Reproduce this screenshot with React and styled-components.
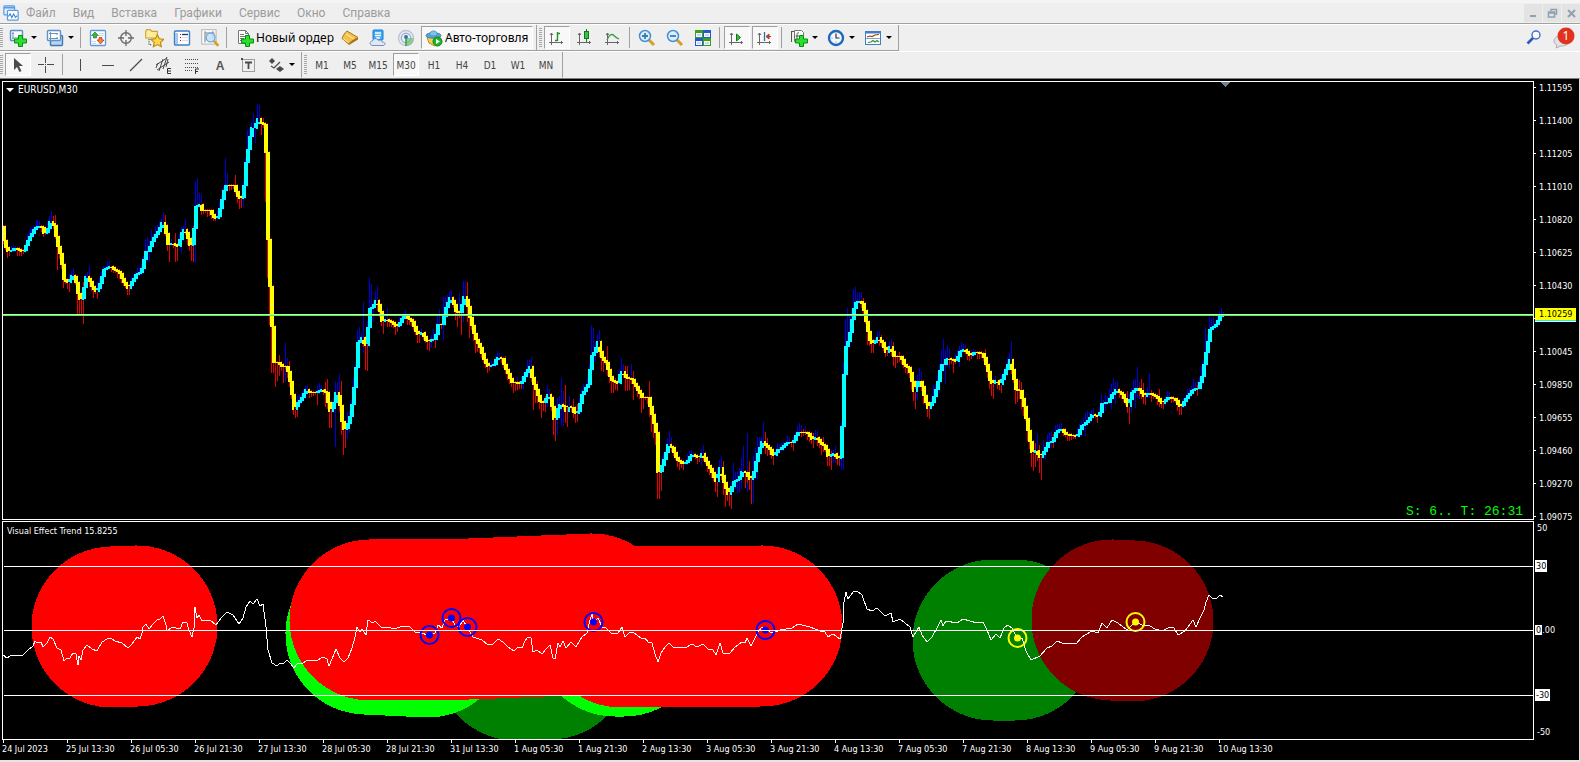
import React, { useState } from 'react';
import styled, { createGlobalStyle, css } from 'styled-components';

const GlobalStyle = createGlobalStyle`
  * { box-sizing: border-box; }
  body {
    margin: 0;
    background: #efefef;
    font-family: "Noto Sans", "Open Sans", sans-serif;
  }
  button {
    font: inherit;
    color: inherit;
    border: 0;
    padding: 0;
    background: none;
  }
`;

const MenuBar = styled.header`
  display: flex;
  align-items: center;
  height: 24px;
  padding-left: 3px;
  border-top: 3px solid #f4f4f4;
  border-bottom: 1px solid #a0a0a0;
`;

const MenuNav = styled.nav`
  display: flex;
  flex: 1;
  gap: 17px;
  margin-left: 7px;
`;

const MenuItem = styled.button`
  font-family: Roboto, "Noto Sans", sans-serif;
  font-size: 12px;
  line-height: 18px;
  color: #9b9b9b;
`;

const WindowButtons = styled.div`
  display: flex;
  gap: 1px;
`;

const WindowButton = styled.button`
  display: flex;
  align-items: center;
  justify-content: center;
  width: 18px;
  height: 18px;
  background: #e3e3e3;
`;

const ToolbarRow = styled.div`
  display: flex;
  height: 27px;
  border-top: 1px solid #fff;
`;

const Toolbar = styled.div`
  display: flex;
  align-items: center;
  border-right: 1px solid #a0a0a0;
  border-bottom: 1px solid ${p => (p.$last ? '#efefef' : '#a0a0a0')};
  padding-right: 2px;
`;

const Grip = styled.span`
  width: 3px;
  height: 20px;
  margin: 0 1px 0 ${p => (p.$wide ? 2 : 0)}px;
  background: repeating-linear-gradient(#a8a8a8 0 1px, #efefef 1px 2px);
`;

const Separator = styled.span`
  width: 1px;
  height: 21px;
  margin: 0 3px 0 2px;
  background: #a0a0a0;
`;

const pressed = css`
  border: 1px solid #fff;
  border-top-color: #a0a0a0;
  border-left-color: #a0a0a0;
  background: #f8f8f8;
`;

const Tool = styled.button`
  display: flex;
  align-items: center;
  justify-content: center;
  width: ${p => (p.$drop ? 37 : 26)}px;
  height: 23px;
  margin: 0 ${p => (p.$drop ? 0 : 1)}px;
  gap: 4px;
  ${p => p.$on && pressed}
`;

const TextTool = styled(Tool)`
  width: auto;
  padding: 0 ${p => (p.$on ? 4 : 1)}px 0 ${p => (p.$on ? 3 : 5)}px;
  gap: 2px;
  font-size: 12px;
  color: #000;
  white-space: nowrap;
`;

const Timeframe = styled(Tool)`
  padding-top: 2px;
  font-family: "DejaVu Sans Condensed", "DejaVu Sans", sans-serif;
  font-size: 10px;
  color: #444;
`;

const Caret = styled.span`
  border: 3px solid transparent;
  border-top-color: #000;
  border-bottom: 0;
`;

const RightTools = styled.div`
  display: flex;
  flex: 1;
  justify-content: flex-end;
  align-items: center;
  gap: 4px;
  padding-right: 4px;
`;

const Workspace = styled.main`
  display: grid;
  grid-template-columns: minmax(0, 1fr) 45px;
  row-gap: 1px;
  padding: 2px 0 0 2px;
  border-top: 1px solid #808080;
  border-right: 1px solid #e0e0e0;
  border-bottom: 2px solid #e4e4e4;
  background: #000;
  color: #fff;
  font-family: "DejaVu Sans Condensed", "DejaVu Sans", sans-serif;
  font-size: 9px;
  line-height: 12px;
`;

const Pane = styled.section`
  position: relative;
  border: 1px solid #fff;
`;

const Plot = styled.svg`
  display: block;
  width: 100%;
  height: ${p => p.$height}px;
`;

const PaneTitle = styled.h2`
  position: absolute;
  top: ${p => (p.$small ? 3 : 2)}px;
  left: ${p => (p.$small ? 4 : 3)}px;
  display: flex;
  align-items: center;
  gap: 4px;
  margin: 0;
  font-size: ${p => (p.$small ? 9 : 10)}px;
  font-weight: normal;
`;

const TitleArrow = styled.span`
  border: 4px solid transparent;
  border-top-color: #fff;
  border-bottom: 0;
`;

const SpreadTimer = styled.p`
  position: absolute;
  right: 10px;
  bottom: 0;
  margin: 0;
  font: 13px/15px "Liberation Mono", monospace;
  color: #00ff00;
`;

const PriceAxis = styled.div`
  position: relative;
  display: flex;
  flex-direction: column;
  gap: 21px;
  padding-top: 1px;
  margin-bottom: -5px;
`;

const PriceLabel = styled.span`
  position: relative;
  height: 12px;
  padding-left: 5px;
  &::before {
    content: "";
    position: absolute;
    left: 0;
    top: 5px;
    width: 2px;
    height: 1px;
    background: #fff;
  }
`;

const PriceTag = styled.span`
  position: absolute;
  left: 1px;
  top: 227px;
  width: 41px;
  height: 13px;
  padding-left: 4px;
  line-height: 12px;
  background: #ff0;
  color: #000;
  border-bottom: 1px solid #00ffff;
  box-shadow: 0 1px #fff;
`;

const LevelAxis = styled.div`
  display: grid;
  grid-template-rows: 38px 64px 65px 37px 12px;
  align-items: start;
  justify-items: start;
  padding: 1px 0 0 1px;
`;

const LevelLabel = styled.span`
  padding: 0 2px;
  line-height: 12px;
`;

const LevelMark = styled.mark`
  padding: 0 1px;
  background: #fff;
  color: #000;
`;

const TimeAxis = styled.div`
  display: flex;
  grid-column: 1 / -1;
  height: 20px;
  margin-top: -1px;
  overflow: hidden;
`;

const TimeLabel = styled.span`
  flex: 0 0 64px;
  padding-top: 3px;
  white-space: nowrap;
  &::before {
    content: "";
    display: block;
    width: 1px;
    height: 3px;
    margin: -3px 0 0 1px;
    background: #fff;
  }
`;

const trend = [
  [3,233],[8,252],[13,251],[16,248],[22,252],[25,251],[30,239],[36,228],[40,227],[43,228],[45,234],[48,233],[51,222],[55,226],[58,243],[62,257],[65,280],[69,283],[73,276],[76,277],[80,300],[83,299],[87,277],[90,280],[94,289],[97,292],[100,287],[105,270],[111,267],[114,269],[120,272],[124,281],[129,289],[132,284],[137,275],[142,273],[147,252],[149,252],[154,240],[159,232],[163,223],[166,228],[169,245],[173,244],[179,247],[183,233],[185,230],[188,235],[192,250],[194,240],[197,207],[201,205],[203,211],[211,211],[216,220],[219,217],[223,200],[226,186],[235,186],[240,200],[244,197],[247,163],[251,137],[253,128],[256,130],[258,117],[261,123],[265,125],[267,153],[269,240],[271,287],[273,327],[275,363],[279,363],[283,367],[288,367],[292,387],[295,410],[299,403],[303,398],[307,390],[311,393],[318,393],[323,390],[327,393],[331,412],[334,408],[337,393],[340,398],[344,430],[348,428],[352,413],[356,380],[359,343],[363,338],[366,347],[368,345],[370,310],[373,308],[377,301],[380,307],[383,322],[388,320],[393,323],[397,327],[400,325],[404,317],
  [407,317],[413,322],[418,335],[423,333],[428,343],[433,340],[436,340],[439,325],[443,325],[447,308],[451,298],[454,302],[457,312],[461,313],[465,297],[468,302],[471,318],[476,338],[481,348],[485,360],[489,367],[495,365],[498,358],[503,359],[507,370],[513,383],[522,384],[527,373],[531,367],[534,383],[537,390],[541,402],[545,403],[549,395],[552,400],[555,420],[557,418],[560,405],[565,407],[567,412],[569,407],[573,408],[576,415],[579,412],[583,395],[590,383],[592,357],[595,353],[599,342],[602,357],[607,363],[612,380],[619,384],[622,370],[627,378],[633,380],[637,387],[643,398],[649,398],[653,415],[657,433],[659,473],[661,472],[665,460],[669,445],[673,448],[678,460],[683,464],[688,463],[692,455],[697,457],[700,459],[703,454],[707,462],[712,471],[717,482],[721,468],[725,483],[729,495],[732,490],[735,482],[740,480],[743,472],[747,473],[751,480],[754,477],[758,457],[763,442],[766,445],[771,450],[774,457],[779,450],
  [781,450],[788,443],[794,443],[798,433],[808,433],[813,440],[817,438],[822,444],[826,447],[829,457],[835,454],[839,459],[842,457],[843,427],[845,375],[847,347],[850,340],[853,320],[856,303],[860,301],[864,305],[868,328],[872,345],[875,343],[879,338],[883,343],[887,353],[891,347],[895,357],[902,357],[906,367],[910,368],[915,392],[919,382],[922,382],[926,400],[929,409],[933,403],[938,387],[942,365],[945,365],[948,358],[952,360],[957,362],[961,352],[965,350],[971,356],[975,353],[984,354],[988,368],[992,385],[997,381],[1001,385],[1005,375],[1011,360],[1014,375],[1017,390],[1021,391],[1025,407],[1030,437],[1033,453],[1037,451],[1041,458],[1045,452],[1049,443],[1053,442],[1057,433],[1062,429],[1067,435],[1078,437],[1082,427],[1088,422],[1093,415],[1100,417],[1103,404],[1109,403],[1113,395],[1117,390],[1123,395],[1129,407],[1133,393],[1138,388],[1142,392],[1145,397],[1150,393],[1158,398],[1163,404],[1169,398],[1176,399],[1180,407],[1183,406],[1188,397],[1194,390],[1199,389],[1203,377],[1207,353],[1211,330],[1217,325],[1221,317],[1223,316],
];

// [x, end] runs from the body to end, [x, top, bottom] is a full range
const upWicks = [
  [51,211],[30,228],[36,220],[73,268],[89,266],[145,239],[147,237],[149,262],[151,230],[155,226],[163,212],[181,227,253],[185,219],[195,181,263],[197,178],[199,193],[201,194],[225,158],[227,173],[243,207],[245,158],[247,130],[249,129],[251,122],[253,113],[255,143],[257,104],[259,105],[285,343,382],[287,358,373],[305,386],[319,383],[335,382,447],[337,382],[339,374,413],[347,412,439],[349,415,433],[353,378],[355,364],[357,330],[359,327],[363,302,353],[369,278],[371,284],[373,322],[375,291],[377,286],[387,308],[405,310],
  [421,328],[431,348],[433,329],[437,315],[439,309],[443,297,340],[445,297],[447,295],[449,291],[451,290],[459,293],[463,281,322],[465,281],[497,354],[501,356],[517,377],[523,374,389],[527,360],[529,360,378],[531,358],[547,385,407],[549,389],[557,398,435],[559,396],[561,378,425],[563,391,426],[569,396],[581,392],[583,384],[589,374],[591,325],[593,328],[595,342,362],[597,334],[599,330],[621,358],[623,364],[631,364],[663,454],[667,439],[669,431],[671,437],[701,451,466],[703,445],[719,460,482],[721,456],[733,463],[735,472,489],[737,472,493],[739,468,493],[741,458,489],[743,446],[747,433,492],[753,456,503],[755,448],[757,437,479],[759,437],[763,422],
  [799,423],[801,425],[805,426],[815,430],[817,430],[833,463],[835,446,463],[841,437,470],[843,363,470],[845,319],[847,308],[849,315],[851,310],[853,289],[855,287],[857,292],[859,292],[861,292],[879,331],[889,342],[891,339],[917,400],[919,368],[921,371],[933,385],[935,384],[939,374,393],[941,350],[943,339],[945,350,384],[947,345],[949,348,369],[955,354],[959,347,367],[961,342],[963,344],[965,345],[995,376],[1007,360],[1009,353],[1011,341],[1037,433,461],[1043,440],[1045,459],[1047,434],[1049,432],[1051,431,448],[1055,425],[1057,426],[1061,423],[1083,418],[1085,413,436],[1087,411],[1093,408],[1101,394],[1105,394,411],[1109,389],[1111,384,409],[1113,378],[1115,382,404],[1117,381],[1131,413],[1133,380],[1135,379,408],[1137,367,398],[1139,382,399],[1149,373,398],[1187,391],[1193,379],[1195,382],[1201,366],[1203,360],[1205,327],[1207,336],[1209,316],[1211,318],[1213,317],[1221,308],
];

const downWicks = [
  [53,216],[55,215],[57,270],[63,288],[69,292],[77,315],[79,315],[81,315],[83,282,324],[93,298],[97,299],[129,295],[165,215],[169,262],[175,233,262],[177,261],[191,261],[193,226,262],[235,175],[239,209],[241,208],[261,135],[263,118],[265,202],[267,278],[269,325],[271,373],[273,373],[275,387],[277,381],[279,355,376],[283,383],[289,361],[293,415],[295,418],[297,417],[317,405],[325,382,407],[327,379,408],[329,428],[331,428],[341,381,435],[343,455],[345,448],[365,370],[367,328,371],[383,334],[395,335],[415,335],
  [417,343],[419,343],[427,350],[429,351],[435,348],[453,297],[455,320],[457,303,327],[461,335],[467,282,322],[469,338],[471,308,328],[473,341],[475,353],[477,352],[479,353],[485,368],[489,371],[505,356,374],[507,379],[513,393],[515,391],[521,389],[533,410],[535,403],[537,381,403],[539,409],[541,418],[543,411],[545,396,412],[551,393],[553,435],[555,441],[565,385,423],[567,427],[573,399,418],[575,423],[577,404,422],[601,371],[603,372],[607,346,368],[609,383],[611,393],[613,393],[615,378,390],[617,391],[625,366,391],[627,366,391],[629,390],[633,371,400],[637,397],[641,413],[643,409],[649,381,417],[651,432],[653,438],[655,445],[657,499],[659,499],[661,491],[677,466],[679,470],[683,470],[709,475],[711,478],[715,492],[717,497],[723,461,495],[725,507],[727,482,501],[729,506],[731,509],[745,488],[749,461,490],[751,504],[765,432,454],[767,438,456],[773,465],
  [793,451],[803,429],[813,433,448],[821,455],[823,437,452],[827,466],[829,466],[831,451,470],[837,463],[839,466],[863,298],[867,345],[871,353],[873,353],[881,335],[885,357],[893,342,366],[895,368],[899,352],[903,355,368],[905,373],[911,390],[913,401],[915,409],[923,404],[927,417],[929,419],[953,373],[985,349],[989,389],[991,396],[993,399],[1001,393],[1015,404],[1017,402],[1019,380,399],[1021,382,409],[1023,416],[1027,441],[1029,449],[1031,467],[1033,471],[1035,443,467],[1039,445,473],[1041,480],[1053,434,448],[1127,391,412],[1129,424],[1141,379,399],[1143,383,404],[1145,405],[1151,390,402],[1159,389,405],[1163,409],[1179,415],[1181,415],[1197,385,396],
];

const oscillator = '3,655 7,658 12,655 23,655 28,650 33,646 35,641 37,643 41,642 43,647 47,643 50,637 53,639 57,648 61,650 64,661 67,658 70,658 73,653 76,654 78,665 79,656 81,660 83,650 87,645 92,649 97,651 102,642 107,639 111,638 115,641 122,643 128,648 132,644 137,637 140,639 142,633 143,627 146,624 149,629 153,624 157,620 160,619 163,616 166,625 167,631 172,627 180,629 183,622 187,623 189,630 192,637 194,628 195,607 197,618 199,615 202,621 210,620 216,625 222,617 227,612 233,615 239,624 243,618 246,607 250,601 253,604 257,599 260,606 263,604 266,627 268,650 272,663 277,666 280,663 284,663 287,660 291,664 294,668 297,664 303,663 308,660 318,660 323,657 327,659 329,666 332,659 336,649 340,658 344,662 348,658 352,648 355,637 357,627 360,632 362,629 366,635 368,620 373,623 375,621 382,628 387,627 395,629 402,626 410,627 415,632 420,633 429,635 435,633 438,625 442,628 445,620 451,618 455,625 459,627 463,620 467,627 473,637 482,640 488,645 493,644 498,639 503,642 508,647 514,651 518,647 522,648 525,641 528,637 531,638 533,652 537,650 542,654 546,649 550,645 553,658 555,659 558,643 560,647 563,641 566,648 571,642 576,647 582,637 587,633 590,620 592,614 593,622 598,618 602,627 606,628 611,633 618,633 622,627 625,637 630,632 634,633 641,638 645,638 648,642 652,643 655,654 658,662 661,653 665,647 669,643 673,647 685,648 692,644 697,647 703,644 708,649 713,650 716,655 720,643 723,653 730,653 735,647 742,642 745,643 747,638 751,646 755,638 758,632 762,627 765,630 773,633 780,630 792,628 798,624 810,627 815,629 820,631 825,632 828,637 833,634 840,639 843,623 844,602 846,592 848,599 853,592 857,591 862,595 867,609 872,611 877,608 885,616 891,613 893,622 900,619 905,623 910,627 913,637 919,627 922,635 927,642 932,637 937,628 941,620 943,626 946,621 957,623 963,619 977,623 983,622 987,630 991,640 996,634 1000,638 1004,628 1008,625 1012,628 1017,638 1022,638 1026,651 1031,660 1040,656 1047,648 1052,646 1057,641 1062,643 1076,644 1082,637 1085,635 1092,631 1098,633 1102,623 1107,628 1112,620 1118,623 1127,630 1135,622 1142,625 1150,626 1155,629 1162,631 1170,627 1174,628 1178,635 1185,631 1193,620 1196,627 1200,618 1204,610 1206,602 1209,595 1212,598 1217,598 1220,595 1223,597';

// thick round strokes behind the oscillator, bottom one first
const zones = [
  { color: '#008000', points: '516,660 550,659' },
  { color: '#00ff00', points: '366,634 428,637' },
  { color: '#00ff00', points: '615,636 624,636' },
  { color: '#ff0000', points: '112,627 137,626' },
  { color: '#ff0000', points: '370,620 470,619 592,614' },
  { color: '#ff0000', points: '621,627 762,626' },
  { color: '#008000', points: '993,640 1015,640' },
  { color: '#800000', points: '1112,620 1133,621' },
];

const signals = [
  [429, 635, '#0000ff'],
  [451, 618, '#0000ff'],
  [467, 627, '#0000ff'],
  [593, 622, '#0000ff'],
  [765, 630, '#0000ff'],
  [1017, 638, '#ffff00'],
  [1135, 622, '#ffff00'],
];

const prices = ['1.11595', '1.11400', '1.11205', '1.11010', '1.10820', '1.10625', '1.10430', '', '1.10045', '1.09850', '1.09655', '1.09460', '1.09270', '1.09075'];

const times = ['24 Jul 2023', '25 Jul 13:30', '26 Jul 05:30', '26 Jul 21:30', '27 Jul 13:30', '28 Jul 05:30', '28 Jul 21:30', '31 Jul 13:30', '1 Aug 05:30', '1 Aug 21:30', '2 Aug 13:30', '3 Aug 05:30', '3 Aug 21:30', '4 Aug 13:30', '7 Aug 05:30', '7 Aug 21:30', '8 Aug 13:30', '9 Aug 05:30', '9 Aug 21:30', '10 Aug 13:30'];

const menus = ['Файл', 'Вид', 'Вставка', 'Графики', 'Сервис', 'Окно', 'Справка'];
const timeframes = ['M1', 'M5', 'M15', 'M30', 'H1', 'H4', 'D1', 'W1', 'MN'];

function trendAt(x) {
  if (x <= trend[0][0]) return trend[0][1] - 6;
  const i = trend.findIndex(p => p[0] >= x);
  if (i < 1) return trend[trend.length - 1][1];
  const [x0, y0] = trend[i - 1];
  const [x1, y1] = trend[i];
  return y0 + ((y1 - y0) * (x - x0)) / (x1 - x0);
}

const candles = [];
for (let x = 3; x <= 1223; x += 2) {
  const open = Math.round(trendAt(x - 2));
  const close = Math.round(trendAt(x + 2));
  candles.push({ x, up: close < open, top: Math.min(open, close) - 1, height: Math.max(1, Math.abs(close - open) + 1) });
}

const wickPath = wicks => wicks.map(([x, a, b]) => `M${x + 0.5} ${a}V${b || Math.round(trendAt(x))}`).join('');
const shortWicks = up => candles
  .filter(c => c.up === up)
  .map(c => {
    const reach = 2 + ((c.x * 7) % 5);
    return `M${c.x + 0.5} ${c.top - (up ? reach : 1)}V${c.top + c.height + (up ? 1 : reach)}`;
  })
  .join('');

function Icon({ size = 18, children }) {
  return <svg width={size} height={size} viewBox="0 0 18 18" fill="none" aria-hidden="true">{children}</svg>;
}

const Plus = () => <path d="M9.500 6.500h4v3.500h4v4h-4v3.500h-4v-3.500h-4v-4h4z" fill="#2be02b" stroke="#0a8a16" />;
const Axes = () => <path d="M3.500 4v12M1 13.500h14M2 6l1.500-2L5 6M13 12l1.500 1.500L13 15" stroke="#666" />;

const icons = {
  newChart: (
    <Icon>
      <rect x="1.500" y="1.500" width="12" height="10" rx="1" fill="#f4f9ff" stroke="#5b8fc0" strokeWidth="1.400" />
      <path d="M4 3v7M3 9h8M3 4.500h2" stroke="#7897b5" />
      <Plus />
    </Icon>
  ),
  profiles: (
    <Icon>
      <rect x="4.500" y="6.500" width="12" height="10" rx="1" fill="#b9d4ee" stroke="#3f77b2" strokeWidth="1.400" />
      <rect x="1.500" y="1.500" width="13" height="10" rx="1" fill="#fbfdff" stroke="#5b93c9" strokeWidth="1.400" />
      <path d="M3 4.500h9M3 9.500h9M4.500 3v8M11 4v2M11 8v2" stroke="#6f93b5" />
    </Icon>
  ),
  market: (
    <Icon>
      <rect x="1.500" y="1.500" width="15" height="15" rx="1" fill="#fff" stroke="#5b9bd8" strokeWidth="1.300" />
      <path d="M10 4.500h5M10 6.500h5M3 12.500h4M3 14.500h4" stroke="#cbd8e8" />
      <path d="M6 3l3.500 3.500H7.500V9h-3V6.500H2.500z" fill="#3bb540" stroke="#14751a" strokeWidth=".6" />
      <path d="M11.500 15l-3.500-4h2V8.500h3V11h2z" fill="#f08050" stroke="#c03a12" strokeWidth=".8" />
    </Icon>
  ),
  dataWindow: (
    <Icon>
      <circle cx="9" cy="9" r="5.300" stroke="#6a6a6a" strokeWidth="1.400" />
      <path d="M9 1v6M9 11v6M1 9h6M11 9h6" stroke="#6a6a6a" strokeWidth="1.300" />
    </Icon>
  ),
  navigator: (
    <Icon size={20}>
      <path d="M1.500 3l1-1.500h3L7 3h5v6H1.500z" fill="#ffec9a" stroke="#c9a63c" />
      <path d="M4.500 10v5h3" stroke="#555" strokeDasharray="1 1" />
      <path d="M12 6l1.800 3.700 4 .5-3 2.700.8 4-3.600-2-3.600 2 .8-4-3-2.700 4-.5z" fill="#ffd84a" stroke="#b98916" />
    </Icon>
  ),
  terminal: (
    <Icon>
      <rect x="1.500" y="2" width="15" height="14" rx="1" fill="#fff" stroke="#3f80c4" strokeWidth="1.400" />
      <path d="M2 4h3v11H2z" fill="#a5c8ee" />
      <path d="M7 5.500h1M7 8.500h1M7 11.500h1" stroke="#d00" />
      <path d="M9 5.500h6" stroke="#123a70" strokeWidth="1.300" />
      <path d="M9 8.500h6M9 11.500h6" stroke="#d3e0f0" />
    </Icon>
  ),
  tester: (
    <Icon size={20}>
      <rect x="1.500" y="1.500" width="13" height="13" fill="#fbfbfb" stroke="#bbb" />
      <path d="M4.500 3v10M4 4.500h9M11.500 3v6" stroke="#888" />
      <path d="M12.500 11.500l4 4.500" stroke="#d5a020" strokeWidth="2.400" />
      <circle cx="9.500" cy="8.500" r="4" fill="#bfe0f8" fillOpacity=".85" stroke="#74a9d6" strokeWidth="1.300" />
    </Icon>
  ),
  order: (
    <Icon>
      <path d="M2.500 1.500h7l3 3v10h-10z" fill="#fff" stroke="#777" />
      <path d="M9.500 1.500v3h3M4 5.500h4M4 7.500h6M4 9.500h4M4 11.500h3" stroke="#777" />
      <Plus />
    </Icon>
  ),
  book: (
    <Icon>
      <path d="M1 9.500L8 16l9-5.500v-2z" fill="#a86f10" />
      <path d="M1 9.500c1-3 3-6 5-7.500L17 8.500c-2 1-6 3-9 6z" fill="#f2c14b" stroke="#a97614" />
      <path d="M2 9.500l6 4.500M5 5l8 5" stroke="#fff0b5" />
    </Icon>
  ),
  cloud: (
    <Icon>
      <rect x="4" y="1" width="10" height="10" rx="1" fill="#3fa9f5" stroke="#1b7bcc" />
      <path d="M6 4h6M6 6.500h6M7 9h4" stroke="#fff" strokeWidth="1.300" />
      <path d="M4 16.500c-4 0-3.500-4.500-.5-4.500 1-3 4.500-3 6-.5 2-1.200 3.500 0 3.700 1.500 3.800 0 3.500 3.500.8 3.500z" fill="#dfe8f8" stroke="#7a8fb8" />
    </Icon>
  ),
  signal: (
    <Icon>
      <circle cx="9" cy="9" r="7.500" stroke="#b9c6d8" strokeWidth="1.400" />
      <circle cx="9" cy="9" r="4.700" stroke="#9ab2ce" strokeWidth="1.400" />
      <path d="M9 9l1 8c5-1 7-4 6.500-8z" fill="#6fbf7a" fillOpacity=".7" />
      <circle cx="9" cy="8" r="2" fill="#2f74c0" />
      <path d="M9 9v8" stroke="#38a04a" strokeWidth="1.600" />
    </Icon>
  ),
  auto: (
    <Icon>
      <path d="M2 8l2 6 6 3 5-4V7z" fill="#f6cf54" stroke="#b98c1c" />
      <ellipse cx="8.500" cy="6.500" rx="7.500" ry="2.700" fill="#5ba9d6" stroke="#3580ad" />
      <path d="M4.500 6c0-5.500 8-5.500 8 0-2 1.300-6 1.300-8 0z" fill="#7cc4ea" stroke="#3580ad" strokeWidth=".7" />
      <circle cx="12.500" cy="12.500" r="4.500" fill="#1eb52a" stroke="#0d8418" />
      <path d="M11 10l4 2.500-4 2.500z" fill="#fff" />
    </Icon>
  ),
  bars: <Icon><Axes /><path d="M9.500 3v9M9 4.500h3M7 11.500h2" stroke="#1c8f26" strokeWidth="1.400" /></Icon>,
  candles: (
    <Icon>
      <Axes />
      <path d="M10.500 0v13" stroke="#14751a" />
      <rect x="8.500" y="2.500" width="4" height="7" fill="#35c442" stroke="#14751a" />
    </Icon>
  ),
  line: <Icon><Axes /><path d="M3 11c3-6 5-7 8-3.500 1.500 1.700 3 2 4 2.500" stroke="#3f9d48" strokeWidth="1.300" /></Icon>,
  zoomIn: (
    <Icon>
      <path d="M11 11l5 5" stroke="#d5a020" strokeWidth="3" />
      <circle cx="7" cy="7" r="5.500" fill="#d8efff" stroke="#4a8fd0" strokeWidth="1.500" />
      <path d="M7 4v6M4 7h6" stroke="#3a7cb8" strokeWidth="1.800" />
    </Icon>
  ),
  zoomOut: (
    <Icon>
      <path d="M11 11l5 5" stroke="#d5a020" strokeWidth="3" />
      <circle cx="7" cy="7" r="5.500" fill="#d8efff" stroke="#4a8fd0" strokeWidth="1.500" />
      <path d="M4 7h6" stroke="#3a7cb8" strokeWidth="1.800" />
    </Icon>
  ),
  tile: (
    <Icon>
      <path d="M1 1h8v8H1zM9 9h8v8H9z" fill="#3da01c" />
      <path d="M9 1h8v8H9zM1 9h8v8H1z" fill="#2458c8" />
      <path d="M2 4h6v4H2zM10 4h6v4h-6zM2 12h6v4H2zM10 12h6v4h-6z" fill="#f4faff" />
      <path d="M3 6h4M11 6h4M3 14h4M11 14h4" stroke="#9bbcdc" />
    </Icon>
  ),
  scroll: <Icon><Axes /><path d="M8.500 5v7l4-3.500z" fill="#36c243" stroke="#14751a" /></Icon>,
  shift: <Icon><Axes /><path d="M8.500 3v9" stroke="#2e6da8" strokeWidth="1.300" /><path d="M15 7.500h-4M13 5l-3 2.500 3 2.500z" stroke="#b43a14" fill="#d9501e" /></Icon>,
  indicators: (
    <Icon>
      <path d="M4.500 1.500h7l2 2v9h-9z" fill="#fff" stroke="#777" />
      <path d="M1.500 2v11M1 2.500h3M9 4c-2-1-2 1-2 3v4M5.500 7H9" stroke="#555" />
      <Plus />
    </Icon>
  ),
  clock: (
    <Icon>
      <circle cx="9" cy="9" r="7" fill="#f1f7fd" stroke="#1d69bd" strokeWidth="2.400" />
      <path d="M9 4.500V9h3.500" stroke="#333" strokeWidth="1.200" />
      <path d="M9 12.500v1M4.500 9h1" stroke="#888" />
    </Icon>
  ),
  template: (
    <Icon>
      <rect x="1.500" y="2.500" width="15" height="13" fill="#fff" stroke="#3d80c4" />
      <path d="M1 3.500h16" stroke="#3d80c4" strokeWidth="2" />
      <path d="M3 8l3-1 2 .5 3-1.500 4-.5" stroke="#a8381a" strokeWidth="1.200" />
      <path d="M2 9.500h14" stroke="#7da7d1" />
      <path d="M4 13.500l3-.5 2-1.500 2 1.500 2-1.500 2 1.500" stroke="#2e9138" strokeWidth="1.200" />
    </Icon>
  ),
  cursor: <Icon><path d="M5 2v12l3-3 2.500 5 2-1L10 10h4z" fill="#4a4a4a" /></Icon>,
  cross: <Icon><path d="M8.500 1v6M8.500 10v7M1 8.500h6M10 8.500h7" stroke="#4a4a4a" /><path d="M8 8h1v1H8z" fill="#4a4a4a" /></Icon>,
  vline: <Icon><path d="M9.500 3v12" stroke="#4a4a4a" /></Icon>,
  hline: <Icon><path d="M3 9.500h12" stroke="#4a4a4a" /></Icon>,
  ray: <Icon><path d="M3 15L15 3" stroke="#4a4a4a" strokeWidth="1.200" /></Icon>,
  channel: (
    <Icon>
      <path d="M1 9L12 2M2 14L14 6M4 15l4-12M8 13l4-12M1 12l2-5M11 11l2-8" stroke="#4a4a4a" />
      <path d="M16 12.500h-3.500v5H16M12.500 15H16" stroke="#333" />
    </Icon>
  ),
  fibo: (
    <Icon>
      <path d="M2 3.500h14M2 7.500h14M2 11.500h14M2 14.500h8" stroke="#4a4a4a" strokeDasharray="1 1" />
      <path d="M12.500 18v-5H16M12.500 15.500H15" stroke="#333" />
    </Icon>
  ),
  label: (
    <Icon>
      <rect x="3.500" y="3.500" width="12" height="12" stroke="#4a4a4a" strokeDasharray="1 1" />
      <path d="M2 2h2v2H2z" fill="#4a4a4a" />
      <path d="M6 6.500h7M9.500 6v7" stroke="#4a4a4a" strokeWidth="1.800" />
    </Icon>
  ),
  arrows: (
    <Icon>
      <path d="M2 5l3-3 3 3-3 3z" fill="#4a4a4a" />
      <path d="M4 10l3 2 6-6" stroke="#4a4a4a" strokeWidth="1.300" />
      <path d="M9 13l4-3 4 3-4 3z" fill="#4a4a4a" />
    </Icon>
  ),
};

function ToolButton({ icon, title, drop, on }) {
  return (
    <Tool aria-label={title} $drop={drop} $on={on}>
      {icons[icon]}
      {drop && <Caret />}
    </Tool>
  );
}

const LetterTool = styled(Tool)`
  padding-top: 2px;
  font-family: "Liberation Sans", sans-serif;
  font-size: 12px;
  font-weight: bold;
  color: #555;
`;

function PricePlot() {
  return (
    <Plot $height={437} role="img" aria-label="EURUSD M30">
      <g transform="translate(-3 -82)" shapeRendering="crispEdges">
        <path d={shortWicks(true) + wickPath(upWicks)} stroke="#0000d8" />
        <path d={shortWicks(false) + wickPath(downWicks)} stroke="#e80000" />
        {candles.map(c => (
          <rect key={c.x} x={c.x - 1} y={c.top} width="2" height={c.height} fill={c.up ? '#00ffff' : '#ffff00'} />
        ))}
        <path d="M1220 82h10l-5 5z" fill="#708090" />
      </g>
      <rect y="232" width="100%" height="1" fill="#ffff00" />
      <rect y="233" width="100%" height="1" fill="#00ffff" />
    </Plot>
  );
}

function TrendPlot() {
  return (
    <Plot $height={217} role="img" aria-label="Visual Effect Trend">
      <g transform="translate(-3 -522)">
        <g shapeRendering="crispEdges" strokeWidth="161" strokeLinecap="round" strokeLinejoin="round" fill="none">
          {zones.map(z => <polyline key={z.points} points={z.points} stroke={z.color} />)}
        </g>
        <polyline points={oscillator} fill="none" stroke="#fff" shapeRendering="crispEdges" />
        {signals.map(([x, y, color]) => (
          <g key={x}>
            <circle cx={x + 0.5} cy={y} r="9" fill="none" stroke={color} strokeWidth="2" />
            <circle cx={x + 0.5} cy={y} r="3.500" fill={color} />
          </g>
        ))}
      </g>
      {[44, 108, 173].map(y => <rect key={y} x="1" y={y} width="100%" height="1" fill="#fff" />)}
    </Plot>
  );
}

export default function App() {
  const [period, setPeriod] = useState('M30');
  return (
    <>
      <GlobalStyle />
      <MenuBar>
        <Icon size={16}>
          <rect x="1" y="1" width="12" height="10" rx="1" fill="#e6f1ff" stroke="#5b9be6" strokeWidth="1.400" />
          <path d="M1 3h12" stroke="#5b9be6" strokeWidth="2" />
          <rect x="5" y="6" width="12" height="11" rx="1" fill="#fff" stroke="#5b9be6" strokeWidth="1.400" />
          <path d="M6 13l2-3 2 4 2-4 2 4 2-2" stroke="#3f80d0" strokeWidth="1.200" />
        </Icon>
        <MenuNav>
          {menus.map(m => <MenuItem key={m}>{m}</MenuItem>)}
        </MenuNav>
        <WindowButtons>
          <WindowButton aria-label="Свернуть">
            <Icon><path d="M6 12h6" stroke="#8fa0b2" strokeWidth="2" /></Icon>
          </WindowButton>
          <WindowButton aria-label="Развернуть">
            <Icon><path d="M8 7V5.500h5.500V10H12M5.500 8h6v5h-6zM5.500 9h6" stroke="#8fa0b2" strokeWidth="1.500" /></Icon>
          </WindowButton>
          <WindowButton aria-label="Закрыть">
            <Icon><path d="M6 6l7 7M13 6l-7 7" stroke="#8fa0b2" strokeWidth="2" /></Icon>
          </WindowButton>
        </WindowButtons>
      </MenuBar>

      <ToolbarRow>
        <Toolbar>
          <Grip />
          <ToolButton icon="newChart" title="Новый график" drop />
          <ToolButton icon="profiles" title="Профили" drop />
          <Separator />
          <ToolButton icon="market" title="Обзор рынка" />
          <ToolButton icon="dataWindow" title="Окно данных" />
          <ToolButton icon="navigator" title="Навигатор" />
          <ToolButton icon="terminal" title="Терминал" />
          <ToolButton icon="tester" title="Тестер стратегий" />
          <Separator />
          <TextTool>{icons.order}Новый ордер</TextTool>
          <ToolButton icon="book" title="MetaEditor" />
          <ToolButton icon="cloud" title="Хостинг" />
          <ToolButton icon="signal" title="Сигналы" />
          <TextTool $on>{icons.auto}Авто-торговля</TextTool>
        </Toolbar>
        <Toolbar>
          <Grip $wide />
          <ToolButton icon="bars" title="Бары" on />
          <ToolButton icon="candles" title="Свечи" />
          <ToolButton icon="line" title="Линия" />
          <Separator />
          <ToolButton icon="zoomIn" title="Увеличить" />
          <ToolButton icon="zoomOut" title="Уменьшить" />
          <ToolButton icon="tile" title="Расположить окна" />
          <Separator />
          <ToolButton icon="scroll" title="Автопрокрутка" on />
          <ToolButton icon="shift" title="Сдвиг графика" on />
          <Separator />
          <ToolButton icon="indicators" title="Индикаторы" drop />
          <ToolButton icon="clock" title="Периоды" drop />
          <ToolButton icon="template" title="Шаблоны" drop />
        </Toolbar>
        <RightTools>
          <Tool aria-label="Поиск">
            <Icon>
              <circle cx="11" cy="6" r="4" fill="#fff" stroke="#3b6fd0" strokeWidth="1.400" />
              <path d="M8 9l-5.500 5.500" stroke="#2a5cc0" strokeWidth="2.600" />
            </Icon>
          </Tool>
          <svg width="24" height="22" viewBox="0 0 24 22" role="img" aria-label="Уведомления">
            <path d="M2 14c0-4 4-5 8-5s7 2 7 5-3 5-8 5l-5 2 1-3c-2-1-3-2-3-4z" fill="#e2e2e6" stroke="#b0b0b4" />
            <circle cx="14" cy="9" r="8.500" fill="#e0321c" />
            <text x="14" y="13" textAnchor="middle" fontFamily="Noto Sans, sans-serif" fontSize="12" fill="#fff">1</text>
          </svg>
        </RightTools>
      </ToolbarRow>

      <ToolbarRow>
        <Toolbar $last>
          <Grip />
          <ToolButton icon="cursor" title="Курсор" on />
          <ToolButton icon="cross" title="Перекрестие" />
          <Separator />
          <ToolButton icon="vline" title="Вертикальная линия" />
          <ToolButton icon="hline" title="Горизонтальная линия" />
          <ToolButton icon="ray" title="Трендовая линия" />
          <ToolButton icon="channel" title="Канал" />
          <ToolButton icon="fibo" title="Фибоначчи" />
          <LetterTool>A</LetterTool>
          <ToolButton icon="label" title="Метка" />
          <ToolButton icon="arrows" title="Стрелки" drop />
        </Toolbar>
        <Toolbar $last>
          <Grip $wide />
          {timeframes.map(t => (
            <Timeframe key={t} $on={t === period} onClick={() => setPeriod(t)}>{t}</Timeframe>
          ))}
        </Toolbar>
      </ToolbarRow>

      <Workspace>
        <Pane>
          <PricePlot />
          <PaneTitle><TitleArrow />EURUSD,M30</PaneTitle>
          <SpreadTimer>S: 6.. T: 26:31</SpreadTimer>
        </Pane>
        <PriceAxis>
          {prices.map((p, i) => <PriceLabel key={i}>{p}</PriceLabel>)}
          <PriceTag>1.10259</PriceTag>
        </PriceAxis>
        <Pane>
          <TrendPlot />
          <PaneTitle $small>Visual Effect Trend 15.8255</PaneTitle>
        </Pane>
        <LevelAxis>
          <LevelLabel>50</LevelLabel>
          <LevelMark>30</LevelMark>
          <span><LevelMark>0</LevelMark>.00</span>
          <LevelMark>-30</LevelMark>
          <LevelLabel>-50</LevelLabel>
        </LevelAxis>
        <TimeAxis>
          {times.map(t => <TimeLabel key={t}>{t}</TimeLabel>)}
        </TimeAxis>
      </Workspace>
    </>
  );
}
